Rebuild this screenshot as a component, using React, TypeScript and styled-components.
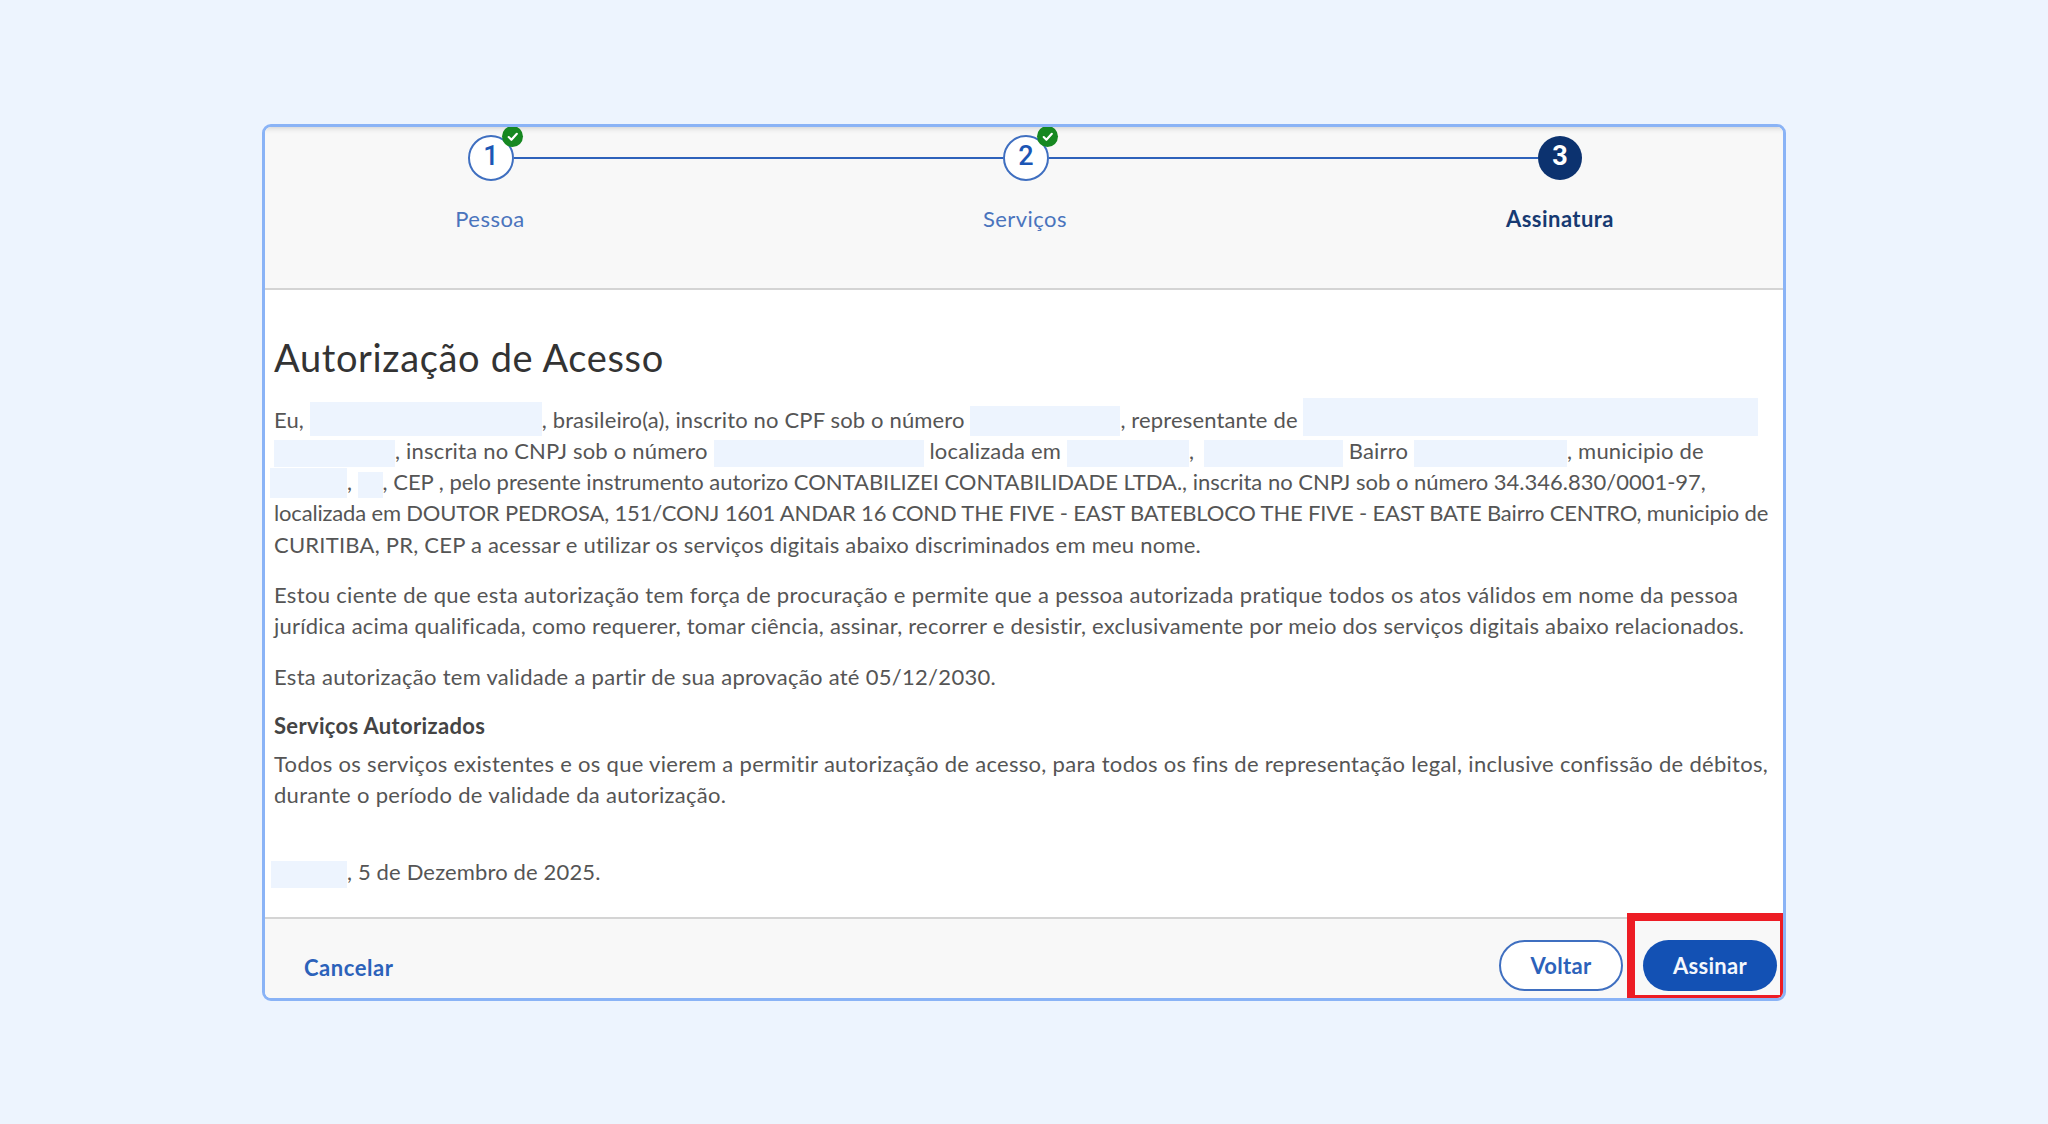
import React from "react";
import styled, { createGlobalStyle } from "styled-components";

const Global = createGlobalStyle`
  html, body { margin: 0; padding: 0; height: 100%; background: #edf4fe; }
  #root { height: 100%; }
`;

const Page = styled.div`
  height: 1124px;
  display: flex;
  align-items: center;
  justify-content: center;
  font-family: "Lato", "Open Sans", sans-serif;
`;

const Card = styled.main`
  box-sizing: border-box;
  position: relative;
  width: 1524px;
  height: 877px;
  border: 3px solid #8ab3f6;
  border-radius: 9px;
  background: #fff;
  display: flex;
  flex-direction: column;
  overflow: hidden;
`;

const Header = styled.header`
  box-sizing: border-box;
  height: 163px;
  flex: none;
  padding-top: 8px;
  background: #f8f8f8;
  border-bottom: 2px solid #d4d4d4;
  box-shadow: inset 0 7px 7px -7px rgba(0, 0, 0, 0.22);
`;

const Track = styled.div`
  display: flex;
  align-items: center;
  padding: 0 201px 0 203px;
  height: 46px;
`;

const Connector = styled.span`
  flex: 1;
  height: 2px;
  background: #2e62bb;
`;

const Circle = styled.span<{ $current?: boolean }>`
  box-sizing: border-box;
  position: relative;
  flex: none;
  width: ${(p) => (p.$current ? 44 : 46)}px;
  height: ${(p) => (p.$current ? 44 : 46)}px;
  border-radius: 50%;
  display: flex;
  align-items: center;
  justify-content: center;
  font-family: "Roboto", sans-serif;
  font-size: 27px;
  font-weight: ${(p) => (p.$current ? 700 : 500)};
  color: ${(p) => (p.$current ? "#fff" : "#1c56b5")};
  background: ${(p) => (p.$current ? "#0c326f" : "#fff")};
  border: ${(p) => (p.$current ? "none" : "2px solid #3f6fc0")};
  padding-bottom: 3px;
`;

const Badge = styled.span`
  position: absolute;
  top: -11px;
  right: -11px;
  width: 21px;
  height: 21px;
  border-radius: 50%;
  background: #168821;
  display: flex;
  align-items: center;
  justify-content: center;
`;

const Labels = styled.div`
  display: flex;
  justify-content: space-between;
  padding: 0 163px 0 165px;
  margin-top: 22px;
`;

const StepLabel = styled.span<{ $current?: boolean }>`
  width: 120px;
  text-align: center;
  font-size: 22px;
  letter-spacing: 0.45px;
  line-height: 31px;
  font-weight: ${(p) => (p.$current ? 700 : 400)};
  color: ${(p) => (p.$current ? "#173a72" : "#4a74bd")};
  white-space: nowrap;
`;

const Body = styled.section`
  flex: 1;
  padding: 44px 9px 0;
  color: #555;
  font-size: 22px;
  line-height: 31.3px;
  white-space: nowrap;
`;

const Title = styled.h1`
  margin: 0 0 18px;
  font-size: 38px;
  letter-spacing: 0.65px;
  line-height: 46px;
  font-weight: 400;
  color: #333;
`;

const Para = styled.p<{ $spacing?: number }>`
  margin: 0 0 ${(p) => p.$spacing ?? 19}px;
`;

const Line = styled.span<{ $ls: number }>`
  display: block;
  letter-spacing: ${(p) => p.$ls}px;
`;

const SubTitle = styled.h2`
  margin: 0 0 7px;
  font-size: 22px;
  letter-spacing: 0.33px;
  line-height: 31px;
  font-weight: 700;
  color: #444;
`;

const Hidden = styled.span<{ $w: number; $h?: number; $shift?: number }>`
  display: inline-block;
  width: ${(p) => p.$w}px;
  height: ${(p) => p.$h ?? 30}px;
  margin-bottom: -8px;
  margin-left: ${(p) => p.$shift ?? 0}px;
  vertical-align: 0;
  background: #edf4fe;
`;

const Footer = styled.footer`
  box-sizing: border-box;
  height: 81px;
  flex: none;
  background: #f8f8f8;
  border-top: 2px solid #d4d4d4;
  display: flex;
  align-items: center;
  padding: 14px 6px 0 39px;
  gap: 20px;
`;

const Cancel = styled.span`
  font-size: 22px;
  letter-spacing: 0.55px;
  font-weight: 700;
  color: #2c62ba;
  margin-right: auto;
  padding-top: 4px;
`;

const Pill = styled.button<{ $primary?: boolean }>`
  box-sizing: border-box;
  height: 51px;
  width: ${(p) => (p.$primary ? 134 : 124)}px;
  border-radius: 26px;
  border: ${(p) => (p.$primary ? "none" : "2px solid #3f6fc0")};
  background: ${(p) => (p.$primary ? "#1351b4" : "#fff")};
  color: ${(p) => (p.$primary ? "#f4f7fc" : "#2c62ba")};
  font-family: "Lato", sans-serif;
  font-size: 22px;
  letter-spacing: 0.3px;
  font-weight: 700;
  padding-top: 2px;
`;

const Highlight = styled.div`
  box-sizing: border-box;
  position: absolute;
  right: -1px;
  bottom: -1px;
  width: 157px;
  height: 86px;
  border-style: solid;
  border-color: #ed1c24;
  border-width: 8px 4px 4px 8px;
  pointer-events: none;
`;

const Check = () => (
  <svg width="13" height="13" viewBox="0 0 24 24" fill="none" stroke="#fff" strokeWidth="4" strokeLinecap="round" strokeLinejoin="round">
    <path d="M5 13l5 5L20 7" />
  </svg>
);

export default function App() {
  return (
    <Page>
      <Global />
      <Card>
        <Header>
          <Track>
            <Circle>1<Badge><Check /></Badge></Circle>
            <Connector />
            <Circle>2<Badge><Check /></Badge></Circle>
            <Connector />
            <Circle $current>3</Circle>
          </Track>
          <Labels>
            <StepLabel>Pessoa</StepLabel>
            <StepLabel>Serviços</StepLabel>
            <StepLabel $current>Assinatura</StepLabel>
          </Labels>
        </Header>
        <Body>
          <Title>Autorização de Acesso</Title>
          <Para>
            <Line $ls={0.15}>Eu, <Hidden $w={232} $h={34} />, brasileiro(a), inscrito no CPF sob o número <Hidden $w={150} />, representante de <Hidden $w={455} $h={38} /></Line>
            <Line $ls={0.2}><Hidden $w={121} $h={27} />, inscrita no CNPJ sob o número <Hidden $w={210} $h={27} /> localizada em <Hidden $w={122} $h={27} />, <Hidden $w={139} $h={27} $shift={4} /> Bairro <Hidden $w={153} $h={27} />, municipio de</Line>
            <Line $ls={-0.01}><Hidden $w={77} $h={30} $shift={-4} />, <Hidden $w={25} $h={26} />, CEP , pelo presente instrumento autorizo CONTABILIZEI CONTABILIDADE LTDA., inscrita no CNPJ sob o número 34.346.830/0001-97,</Line>
            <Line $ls={-0.17}>localizada em DOUTOR PEDROSA, 151/CONJ 1601 ANDAR 16 COND THE FIVE - EAST BATEBLOCO THE FIVE - EAST BATE Bairro CENTRO, municipio de</Line>
            <Line $ls={0.23}>CURITIBA, PR, CEP a acessar e utilizar os serviços digitais abaixo discriminados em meu nome.</Line>
          </Para>
          <Para>
            <Line $ls={0.33}>Estou ciente de que esta autorização tem força de procuração e permite que a pessoa autorizada pratique todos os atos válidos em nome da pessoa</Line>
            <Line $ls={0.24}>jurídica acima qualificada, como requerer, tomar ciência, assinar, recorrer e desistir, exclusivamente por meio dos serviços digitais abaixo relacionados.</Line>
          </Para>
          <Para $spacing={18}><Line $ls={0.29}>Esta autorização tem validade a partir de sua aprovação até 05/12/2030.</Line></Para>
          <SubTitle>Serviços Autorizados</SubTitle>
          <Para $spacing={46}>
            <Line $ls={0.3}>Todos os serviços existentes e os que vierem a permitir autorização de acesso, para todos os fins de representação legal, inclusive confissão de débitos,</Line>
            <Line $ls={0.3}>durante o período de validade da autorização.</Line>
          </Para>
          <Para><Line $ls={0.15}><Hidden $w={76} $h={27} $shift={-3} />, 5 de Dezembro de 2025.</Line></Para>
        </Body>
        <Footer>
          <Cancel>Cancelar</Cancel>
          <Pill>Voltar</Pill>
          <Pill $primary>Assinar</Pill>
        </Footer>
        <Highlight />
      </Card>
    </Page>
  );
}
